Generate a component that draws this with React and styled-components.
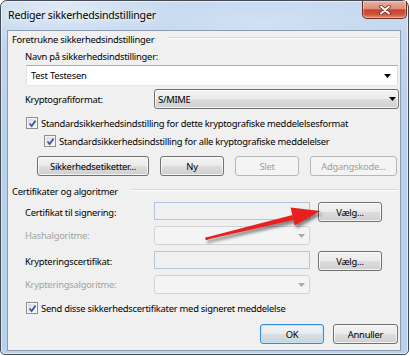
import React from "react";
import styled, { createGlobalStyle } from "styled-components";

const GlobalStyle = createGlobalStyle`
  html, body {
    margin: 0;
    padding: 0;
    background: #ffffff;
  }
  body {
    font-family: "Noto Sans", "Open Sans", sans-serif;
    font-size: 9.4px;
    letter-spacing: -0.25px;
    color: #000;
  }
`;

const ArrowDown = ({ color = "#000" }) => (
  <svg width="7" height="4" viewBox="0 0 7 4">
    <polygon points="0,0 7,0 3.5,4" fill={color} />
  </svg>
);

const CheckMark = () => (
  <svg width="9" height="9" viewBox="0 0 9 9">
    <path d="M1.5 4.5 L3.6 7 L7.6 1.6" fill="none" stroke="#3b58a0" strokeWidth="1.8" />
  </svg>
);

const Checkbox = ({ children, indent, mt }) => (
  <CheckRow $indent={indent} $mt={mt}>
    <CheckBox>
      <CheckMark />
    </CheckBox>
    <span>{children}</span>
  </CheckRow>
);

const App = () => {
  return (
    <React.Fragment>
      <GlobalStyle />
      <Window>
        <TitleBar>
          <Title>Rediger sikkerhedsindstillinger</Title>
          <CloseButton>
            <svg width="12" height="10" viewBox="0 0 12 10">
              <path d="M2 1.5 L10 8.5 M10 1.5 L2 8.5" stroke="#6b2a20" strokeWidth="3.6" strokeLinecap="round" />
              <path d="M2 1.5 L10 8.5 M10 1.5 L2 8.5" stroke="#ffffff" strokeWidth="2" strokeLinecap="round" />
            </svg>
          </CloseButton>
        </TitleBar>

        <Client>
          <SectionHeader $mt={1}>Foretrukne sikkerhedsindstillinger</SectionHeader>
          <PlainLabel>Navn på sikkerhedsindstillinger:</PlainLabel>
          <EditCombo>
            <span>Test Testesen</span>
            <ArrowDown />
          </EditCombo>

          <FieldRow $mt={3} $h={20}>
            <FieldLabel>Kryptografiformat:</FieldLabel>
            <ListCombo>
              <span>S/MIME</span>
              <ArrowDown />
            </ListCombo>
          </FieldRow>

          <Checkbox indent={18} mt={8}>
            Standardsikkerhedsindstilling for dette kryptografiske meddelelsesformat
          </Checkbox>
          <Checkbox indent={36} mt={6}>
            Standardsikkerhedsindstilling for alle kryptografiske meddelelser
          </Checkbox>

          <ButtonRow>
            <Button $w={112}>Sikkerhedsetiketter...</Button>
            <Button $w={64}>Ny</Button>
            <Button $w={64} disabled>
              Slet
            </Button>
            <Button $w={87} disabled>
              Adgangskode...
            </Button>
          </ButtonRow>

          <SectionHeader $mt={8}>Certifikater og algoritmer</SectionHeader>

          <FieldRow $mt={2} $h={20}>
            <FieldLabel>Certifikat til signering:</FieldLabel>
            <TextField />
            <SideButton $w={64}>Vælg...</SideButton>
          </FieldRow>
          <FieldRow $mt={4} $h={19}>
            <FieldLabel $disabled>Hashalgoritme:</FieldLabel>
            <DisabledCombo>
              <ArrowDown color="#a8a8a8" />
            </DisabledCombo>
          </FieldRow>
          <FieldRow $mt={6} $h={20}>
            <FieldLabel>Krypteringscertifikat:</FieldLabel>
            <TextField />
            <SideButton $w={64}>Vælg...</SideButton>
          </FieldRow>
          <FieldRow $mt={4} $h={19}>
            <FieldLabel $disabled>Krypteringsalgoritme:</FieldLabel>
            <DisabledCombo>
              <ArrowDown color="#a8a8a8" />
            </DisabledCombo>
          </FieldRow>

          <Checkbox indent={18} mt={8}>
            Send disse sikkerhedscertifikater med signeret meddelelse
          </Checkbox>

          <Footer>
            <DefaultButton $w={64}>OK</DefaultButton>
            <Button $w={65}>Annuller</Button>
          </Footer>
        </Client>

        <RedArrow width="135" height="50" viewBox="0 0 135 50">
          <polygon points="11,39.4 97.4,17 98.6,22 12.4,41.6" fill="#e8201f" />
          <circle cx="11.8" cy="40.5" r="1.6" fill="#e8201f" />
          <polygon points="125.5,13 95.6,9.6 99.6,27.6" fill="#e8201f" />
        </RedArrow>
      </Window>
    </React.Fragment>
  );
};

export default App;

const Window = styled.div`
  position: relative;
  box-sizing: border-box;
  width: 409px;
  height: 355px;
  display: flex;
  flex-direction: column;
  border: 1px solid #454b55;
  border-radius: 7px 7px 5px 5px;
  background: radial-gradient(ellipse 120px 40px at 60px 8px, rgba(255, 255, 255, 0.45), transparent),
    radial-gradient(ellipse 160px 30px at 260px 22px, rgba(255, 255, 255, 0.25), transparent),
    linear-gradient(180deg, #c4d8ef 0%, #b9d0ea 40%, #bad1ea 100%);
  box-shadow: inset 0 0 0 1px rgba(255, 255, 255, 0.55);
`;

const TitleBar = styled.div`
  height: 29px;
  display: flex;
  justify-content: space-between;
  align-items: flex-start;
  padding-left: 7px;
`;

const Title = styled.span`
  margin-top: 6px;
  font-size: 10.6px;
  letter-spacing: -0.2px;
  line-height: 16px;
  color: #000;
  text-shadow: 0 0 6px rgba(255, 255, 255, 0.95), 0 0 10px rgba(255, 255, 255, 0.8);
`;

const CloseButton = styled.div`
  box-sizing: border-box;
  width: 45px;
  height: 18px;
  margin-right: 1px;
  display: flex;
  align-items: center;
  justify-content: center;
  border: 1px solid #6a2b20;
  border-top: none;
  border-radius: 0 0 5px 5px;
  background: linear-gradient(180deg, #eab0a2 0%, #dc8f7b 45%, #c6432d 52%, #cd523a 78%, #e3906f 100%);
  box-shadow: inset 0 0 0 1px rgba(255, 255, 255, 0.35);
`;

const Client = styled.div`
  flex: 1;
  display: flex;
  flex-direction: column;
  margin: 0 7px 3px 6px;
  border: 1px solid #8c9db3;
  background: #f0f0f0;
`;

const SectionHeader = styled.div`
  display: flex;
  gap: 14px;
  height: 16px;
  line-height: 16px;
  margin: ${(p) => p.$mt}px 2px 0 4px;
  white-space: nowrap;

  &::after {
    content: "";
    flex: 1;
    margin-top: 5px;
    height: 0;
    border-top: 1px solid #d5d5d5;
    border-bottom: 1px solid #ffffff;
  }
`;

const PlainLabel = styled.div`
  height: 16px;
  line-height: 16px;
  margin: 1px 0 0 17px;
`;

const EditCombo = styled.div`
  box-sizing: border-box;
  height: 21px;
  margin: 0 2px 0 18px;
  display: flex;
  align-items: center;
  justify-content: space-between;
  padding: 0 6px 0 4px;
  background: #ffffff;
  border: 1px solid;
  border-color: #abadb3 #dbdfe6 #e3e9ef #e2e3ea;
`;

const FieldRow = styled.div`
  display: flex;
  align-items: center;
  height: ${(p) => p.$h}px;
  margin: ${(p) => p.$mt}px 1px 0 17px;
`;

const FieldLabel = styled.span`
  width: 129px;
  flex: none;
  color: ${(p) => (p.$disabled ? "#a3a3a3" : "#000")};
`;

const ListCombo = styled.div`
  box-sizing: border-box;
  flex: 1;
  height: 20px;
  display: flex;
  align-items: center;
  justify-content: space-between;
  padding: 0 2px 0 3px;
  border: 1px solid #707070;
  border-radius: 3px;
  background: linear-gradient(180deg, #f2f2f2 0%, #ebebeb 50%, #dddddd 51%, #cfcfcf 100%);
  box-shadow: inset 0 0 0 1px rgba(255, 255, 255, 0.7);
`;

const TextField = styled.div`
  box-sizing: border-box;
  width: 156px;
  height: 18px;
  align-self: flex-start;
  border: 1px solid #b2c5dd;
  background: #f0f0f0;
`;

const DisabledCombo = styled.div`
  box-sizing: border-box;
  width: 156px;
  height: 19px;
  display: flex;
  align-items: center;
  justify-content: flex-end;
  padding-right: 4px;
  border: 1px solid #d2d2d2;
  border-radius: 3px;
  background: #f4f4f4;
`;

const Button = styled.button`
  box-sizing: border-box;
  width: ${(p) => p.$w}px;
  height: 20px;
  padding: 0;
  font: inherit;
  letter-spacing: inherit;
  color: #000;
  border: 1px solid #707070;
  border-radius: 3px;
  background: linear-gradient(180deg, #f2f2f2 0%, #ebebeb 50%, #dddddd 51%, #cfcfcf 100%);
  box-shadow: inset 0 0 0 1px rgba(255, 255, 255, 0.75);

  &:disabled {
    color: #a0a0a0;
    border-color: #b5b8ba;
    background: #f4f4f4;
    box-shadow: none;
  }
`;

const SideButton = styled(Button)`
  margin-left: 8px;
`;

const DefaultButton = styled(Button)`
  border-color: #3c8ad0;
  box-shadow: inset 0 0 0 1px #bfe4fb;
  background: linear-gradient(180deg, #f0f4f7 0%, #e7ecf0 50%, #d9dfe4 51%, #ccd4da 100%);
`;

const ButtonRow = styled.div`
  display: flex;
  gap: 11px;
  height: 20px;
  margin: 9px 0 0 29px;
`;

const Footer = styled.div`
  display: flex;
  justify-content: flex-end;
  gap: 9px;
  height: 20px;
  margin: 10px 2px 0 0;
`;

const CheckRow = styled.div`
  display: flex;
  align-items: center;
  gap: 3px;
  height: 12px;
  margin: ${(p) => p.$mt}px 0 0 ${(p) => p.$indent}px;
  white-space: nowrap;
`;

const CheckBox = styled.span`
  box-sizing: border-box;
  width: 12px;
  height: 12px;
  flex: none;
  display: flex;
  align-items: center;
  justify-content: center;
  border: 1px solid #8e8f8f;
  background: linear-gradient(135deg, #cfd3d9 0%, #eef0f2 60%, #fcfcfc 100%);
  box-shadow: inset 0 0 0 1px #f6f6f6;
`;

const RedArrow = styled.svg`
  position: absolute;
  left: 194px;
  top: 197px;
  pointer-events: none;
  filter: drop-shadow(2px 3px 1.5px rgba(0, 0, 0, 0.45));
`;
